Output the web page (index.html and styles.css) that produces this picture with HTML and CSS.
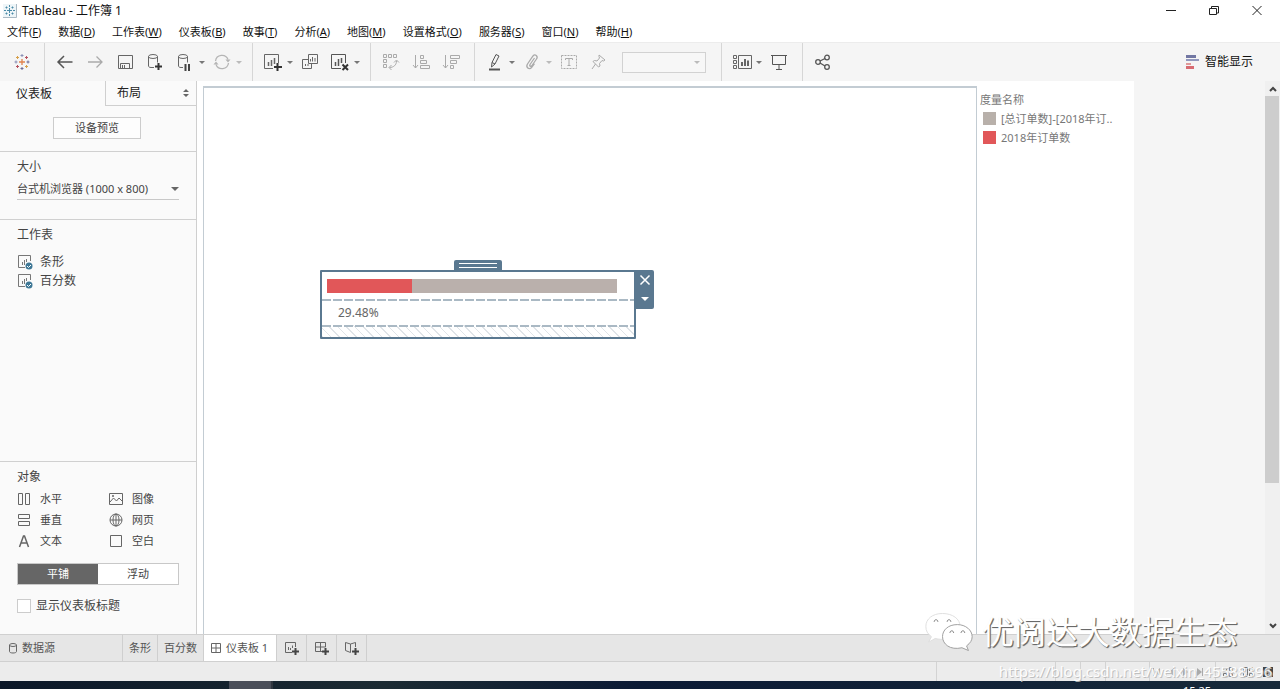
FILE: index.html
```html
<!DOCTYPE html>
<html lang="zh-CN">
<head>
<meta charset="utf-8">
<title>Tableau - 工作簿 1</title>
<link rel="stylesheet" href="styles.css">
</head>
<body>
<header class="titlebar">
  <svg class="app-icon" width="14" height="14" viewBox="0 0 14 14"><rect width="14" height="14" fill="#eef5f8"/><path d="M13.500 0v13.500H0" fill="none" stroke="#a9b9c4"/><path d="M6.500 4v5M4 6.500h5M6.500 1v2M6.500 10v2M1 6.500h2M10 6.500h2M3.500 2.500v2M2.500 3.500h2M9.500 2.500v2M8.500 3.500h2M3.500 8.500v2M2.500 9.500h2M9.500 8.500v2M8.500 9.500h2" stroke="#4b8ba8" fill="none"/></svg>
  <span class="title">Tableau - 工作簿 1</span>
  <div class="window-buttons">
    <button aria-label="最小化"><svg width="12" height="12"><path d="M1 5.500h10" stroke="#222"/></svg></button>
    <button aria-label="还原"><svg width="12" height="12" fill="none" stroke="#222"><path d="M1.500 3.500h7v6h-7zM3.500 3V1.500h7V8H9"/></svg></button>
    <button aria-label="关闭"><svg width="12" height="12"><path d="M1.500 1l9 9M10.500 1l-9 9" stroke="#222"/></svg></button>
  </div>
</header>
<nav class="menubar">
  <button>文件(<u>F</u>)</button><button>数据(<u>D</u>)</button><button>工作表(<u>W</u>)</button><button>仪表板(<u>B</u>)</button><button>故事(<u>T</u>)</button><button>分析(<u>A</u>)</button><button>地图(<u>M</u>)</button><button>设置格式(<u>O</u>)</button><button>服务器(<u>S</u>)</button><button>窗口(<u>N</u>)</button><button>帮助(<u>H</u>)</button>
</nav>
<div class="toolbar">
  <div class="group home">
    <button class="tool" aria-label="起始页"><svg width="18" height="18" fill="none"><path d="M9 6v6M6 9h6" stroke="#e0824c" stroke-width="1.300"/><path d="M9 1v3M7.500 2.500h3M1.500 9h3M3 7.500v3" stroke="#8a8fb5"/><path d="M9 14v3M7.500 15.500h3M13.500 9h3M15 7.500v3" stroke="#6d6a95"/><path d="M4.500 3v3M3 4.500h3M13.500 12v3M12 13.500h3" stroke="#d7a04a"/><path d="M13.500 3v3M12 4.500h3M4.500 12v3M3 13.500h3" stroke="#b5505e"/></svg></button>
  </div>
  <div class="group">
    <button class="tool" aria-label="撤消"><svg width="18" height="18" fill="none" stroke="#555" stroke-width="1.500"><path d="M2 9h14.500M8 3L2 9l6 6"/></svg></button>
    <button class="tool" aria-label="恢复" disabled><svg width="18" height="18" fill="none" stroke="#aaa" stroke-width="1.300"><path d="M2 9h14M10.500 3.500L16 9l-5.500 5.500"/></svg></button>
    <button class="tool" aria-label="保存"><svg width="18" height="18" fill="none" stroke="#666"><path d="M2.500 2.500h14v13h-14zM4.500 15V10.500h9V15M6.500 12v3M8.500 12v3"/></svg></button>
    <button class="tool" aria-label="新建数据源"><svg width="18" height="18" fill="none" stroke="#666"><path d="M8 14.500H5c-1.500 0-2.500-.700-2.500-1.500V3.500M11.500 3.500v6"/><ellipse cx="7" cy="3.500" rx="4.500" ry="2"/><path d="M12.500 10v7M9 13.500h7" stroke="#333" stroke-width="2"/></svg></button>
    <button class="tool" aria-label="暂停更新"><svg width="18" height="18" fill="none" stroke="#666"><path d="M7 14.500H5c-1.500 0-2.500-.700-2.500-1.500V3.500M11.500 3.500v6"/><ellipse cx="7" cy="3.500" rx="4.500" ry="2"/><path d="M9.500 11v7M13 11v7" stroke="#444" stroke-width="2"/></svg></button>
    <button class="caret" aria-label="更多"></button>
    <button class="tool" aria-label="刷新" disabled><svg width="18" height="18" fill="none" stroke="#b5b5b5" stroke-width="1.300"><path d="M2.500 8A6.500 6.500 0 0 1 15 6.500M15.500 10A6.500 6.500 0 0 1 3 11.500"/><path d="M12.500 6.500h5L15 9.500zM.500 11.500h5L3 8.500z" fill="#b5b5b5" stroke="none"/></svg></button>
    <button class="caret faint" aria-label="更多" disabled></button>
  </div>
  <div class="group">
    <button class="tool" aria-label="新建工作表"><svg width="18" height="18" fill="none" stroke="#666"><path d="M9 15.500H.500v-14h14V10"/><path d="M4.500 9v4M7.500 7v6M10.500 5v6" stroke-width="1.500"/><path d="M13.500 10v8M10 14h8" stroke="#333" stroke-width="2"/></svg></button>
    <button class="caret" aria-label="更多"></button>
    <button class="tool" aria-label="复制工作表"><svg width="18" height="18" fill="none" stroke="#666"><path d="M7.500 1.500h9v9h-9zM7 6.500H1.500v9h9V11M4.500 11v2M7 11v2M9.500 6v2.500M11.500 4v4.500M14 5v3.500"/></svg></button>
    <button class="tool" aria-label="清除工作表"><svg width="18" height="18" fill="none" stroke="#555"><path d="M10 15.500H.500v-14h14V10"/><path d="M4.500 9v4M7.500 6v7M10.500 5v5" stroke-width="1.500"/><path d="M11.500 11.500l5.500 5.500M17 11.500L11.500 17" stroke="#333" stroke-width="2"/></svg></button>
    <button class="caret" aria-label="更多"></button>
  </div>
  <div class="group">
    <button class="tool" aria-label="交换行和列" disabled><svg width="18" height="18" fill="none" stroke="#aaa"><path d="M1.500 1.500h3v3h-3zM6.500 1.500h3v3h-3zM11.500 1.500h3v3h-3zM1.500 6.500h3v3h-3zM1.500 11.500h3v3h-3zM14.500 8c0 4-3 6.500-7 6.500M12 9.500L14.500 7 17 9.500M9.500 12L7 14.500l2.500 2.500"/></svg></button>
    <button class="tool" aria-label="升序" disabled><svg width="18" height="18" fill="none" stroke="#aaa"><path d="M3.500 2v13M1 12l2.500 3L6 12M8.500 2.500h3v3h-3zM8.500 7.500h6v3h-6zM8.500 12.500h9v3h-9z"/></svg></button>
    <button class="tool" aria-label="降序" disabled><svg width="18" height="18" fill="none" stroke="#aaa"><path d="M3.500 2v13M1 12l2.500 3L6 12M8.500 2.500h9v3h-9zM8.500 7.500h6v3h-6zM8.500 12.500h3v3h-3z"/></svg></button>
  </div>
  <div class="group">
    <button class="tool" aria-label="突出显示"><svg width="18" height="18" fill="none" stroke="#555"><path d="M6 9.500L10 1.500l3 1.500-4 8-3.500 3zM6 9.500l3 1.500"/><path d="M3 16.500h11" stroke-width="2"/></svg></button>
    <button class="caret" aria-label="更多"></button>
    <button class="tool" aria-label="分组" disabled><svg width="18" height="18" fill="none" stroke="#aaa" stroke-width="1.300"><path d="M11.500 5L7 11.500c-1 1.500 1 2.500 2 1L13.500 6c2-3-1.500-5.500-3.500-3L4.500 11c-2 3 1.500 6.500 4 3.500l3-4"/></svg></button>
    <button class="caret faint" aria-label="更多" disabled></button>
    <button class="tool" aria-label="显示标签" disabled><svg width="18" height="18" fill="none" stroke="#aaa"><path d="M1.500 2.500h15v13h-15z" stroke-dasharray="2 1"/><path d="M5.500 7V5.500h7V7M9 5.500v7M7.500 12.500h3"/></svg></button>
    <button class="tool" aria-label="固定" disabled><svg width="18" height="18" fill="none" stroke="#aaa"><path d="M9 2l6 5-1.500 1-1.500-.500-2.500 3 .500 2.500-1.500 1L3 8.500l1.500-1 2.500.500L9.500 5 9 3.500zM5.500 11L2 16"/></svg></button>
    <span class="fit"><select aria-label="适合" disabled><option></option></select></span>
  </div>
  <div class="group">
    <button class="tool" aria-label="显示卡"><svg width="20" height="18" fill="none" stroke="#666"><path d="M6.500 2.500h13v13h-13zM1.500 2.500h3v3h-3zM1.500 7.500h3v3h-3zM1.500 12.500h3v3h-3z"/><path d="M10 9v4M13 6v7M16 7.500V13" stroke-width="2"/></svg></button>
    <button class="caret" aria-label="更多"></button>
    <button class="tool" aria-label="演示模式"><svg width="18" height="18" fill="none" stroke="#555"><path d="M1 2.500h16M2.500 3v8.500h13V3M9 12v4.500M6 16.500h6"/></svg></button>
  </div>
  <div class="group last">
    <button class="tool" aria-label="共享"><svg width="18" height="18" fill="none" stroke="#555" stroke-width="1.300"><circle cx="4" cy="9" r="2.300"/><circle cx="13" cy="4.500" r="2.300"/><circle cx="13" cy="14" r="2.300"/><path d="M6 8l5-2.500M6 10l5 3"/></svg></button>
  </div>
  <button class="show-me"><svg width="14" height="16"><path d="M1 2.500h10" stroke="#7277a3" stroke-width="3"/><path d="M1 6h13" stroke="#9298bd" stroke-width="2"/><path d="M1 10h5" stroke="#e09a9a" stroke-width="2"/><path d="M1 13.500h8" stroke="#d86b72" stroke-width="3"/></svg>智能显示</button>
</div>

<main class="workspace">
  <aside class="sidebar">
    <div class="side-tabs"><button class="side-tab current">仪表板</button><button class="side-tab">布局<svg width="6" height="8" fill="#666"><path d="M0 3l3-3 3 3zM0 5h6L3 8z"/></svg></button></div>
    <section class="device"><button class="preview">设备预览</button></section>
    <section class="size">
      <label for="size">大小</label>
      <select id="size"><option>台式机浏览器 (1000 x 800)</option></select>
    </section>
    <section class="sheets">
      <h2>工作表</h2>
      <ul>
        <li><svg width="18" height="18" fill="none" stroke="#777"><path d="M14.500 8V2.500h-12v12H9M6.500 9v3M8.500 7v5M10.500 6v3"/><circle cx="13" cy="13" r="3.500" fill="#3f7896" stroke="none"/><path d="M11 13l1.500 1.500L15 12" stroke="#fff"/></svg>条形</li>
        <li><svg width="18" height="18" fill="none" stroke="#777"><path d="M14.500 8V2.500h-12v12H9M6.500 9v3M8.500 7v5M10.500 6v3"/><circle cx="13" cy="13" r="3.500" fill="#3f7896" stroke="none"/><path d="M11 13l1.500 1.500L15 12" stroke="#fff"/></svg>百分数</li>
      </ul>
    </section>
    <section class="objects">
      <h2>对象</h2>
      <div class="object-grid">
        <span><svg width="14" height="14" fill="none" stroke="#666"><path d="M1.500 1.500h4v11h-4zM8.500 1.500h4v11h-4z"/></svg>水平</span>
        <span><svg width="14" height="14" fill="none" stroke="#666"><path d="M.500 1.500h13v11H.500zM1 10l3.500-4 3 3L10 6l3 3"/><circle cx="4" cy="4" r=".700"/></svg>图像</span>
        <span><svg width="14" height="14" fill="none" stroke="#666"><path d="M1.500 1.500h11v4h-11zM1.500 8.500h11v4h-11z"/></svg>垂直</span>
        <span><svg width="14" height="14" fill="none" stroke="#666"><circle cx="7" cy="7" r="6"/><ellipse cx="7" cy="7" rx="3" ry="6"/><path d="M1 7h12M7 1v12"/></svg>网页</span>
        <span><svg width="14" height="14" fill="none" stroke="#666" stroke-width="1.500"><path d="M2.500 13L6.500 2h1l4 11M4 9h6"/></svg>文本</span>
        <span><svg width="14" height="14" fill="none" stroke="#666"><path d="M1.500 1.500h11v11h-11z"/></svg>空白</span>
      </div>
      <div class="layout-mode"><button class="active">平铺</button><button>浮动</button></div>
      <label class="show-title"><input type="checkbox">显示仪表板标题</label>
    </section>
  </aside>

  <div class="dashboard">
    <div class="canvas">
      <div class="container">
        <button class="handle" aria-label="移动"></button>
        <div class="bar-zone"><div class="bar"><div class="bar-fill" style="width:29.48%"></div></div></div>
        <div class="value-zone">29.48%</div>
        <div class="empty-zone"></div>
        <div class="container-tools">
          <button aria-label="移除"><svg width="12" height="12"><path d="M1.500 1.500l9 9M10.500 1.500l-9 9" stroke="#fff" stroke-width="1.500"/></svg></button>
          <button aria-label="更多选项"><svg width="8" height="4" fill="#fff"><path d="M0 0h8L4 4z"/></svg></button>
        </div>
      </div>
    </div>
    <div class="legend">
      <h3>度量名称</h3>
      <p><i class="swatch rest"></i>[总订单数]-[2018年订..</p>
      <p><i class="swatch year"></i>2018年订单数</p>
    </div>
  </div>
  <div class="scrollbar">
    <svg width="10" height="8" fill="none" stroke="#444" stroke-width="2"><path d="M2 6l3-3 3 3"/></svg>
    <div class="track"><div class="thumb"></div></div>
    <svg width="10" height="8" fill="none" stroke="#444" stroke-width="2"><path d="M2 2l3 3 3-3"/></svg>
  </div>
</main>

<footer class="sheet-tabs">
  <button class="source"><svg width="10" height="12" fill="none" stroke="#666"><ellipse cx="5" cy="3" rx="3.500" ry="1.500"/><path d="M1.500 3v6.500c0 2 7 2 7 0V3"/></svg>数据源</button>
  <button>条形</button>
  <button>百分数</button>
  <button class="current"><svg width="12" height="12" fill="none" stroke="#666"><path d="M1.500 1.500h9v9h-9zM6 1.500v9M1.500 6h9"/></svg>仪表板 1</button>
  <button class="add" aria-label="新建工作表"><svg width="16" height="16" fill="none" stroke="#666"><path d="M8 12.500H1.500v-10h10V7M4.500 7v3M6.500 8v2M8.500 5.500V8"/><path d="M11.500 8v7M8 11.500h7" stroke="#444" stroke-width="2"/></svg></button>
  <button class="add" aria-label="新建仪表板"><svg width="16" height="16" fill="none" stroke="#666"><path d="M8 11.500H1.500v-9h10V7M6.500 2.500v9M1.500 7h10"/><path d="M11.500 8v7M8 11.500h7" stroke="#444" stroke-width="2"/></svg></button>
  <button class="add" aria-label="新建故事"><svg width="16" height="16" fill="none" stroke="#666"><path d="M11.500 7V2.500L6.500 4l-5-1.500v8l5 2V4"/><path d="M11.500 8v7M8 11.500h7" stroke="#444" stroke-width="2"/></svg></button>
</footer>
<div class="statusbar">
  <span class="cell wide"></span><span class="cell"></span><span class="cell"></span><span class="cell mid"></span>
  <span class="cell nav"><svg width="60" height="12" fill="#aaa"><path d="M3 2h1v8H3zM10 2v8L5 6zM24 2v8l-5-4zM33 2v8l5-4zM47 2v8l5-4zM52 2h1v8h-1z"/></svg></span>
  <span class="cell views"><svg width="52" height="12" fill="none" stroke="#777"><path d="M1.500 1.500h3v3h-3zM7.500 1.500h3v3h-3zM1.500 7.500h3v3h-3zM7.500 7.500h3v3h-3zM21.500 1.500h4v9h-4zM27.500 1.500h3v4h-3zM27.500 7.500h3v3h-3z"/><path d="M41 1h10v10H41z" fill="#444" stroke="none"/><path d="M44 3h3v6h-3" stroke="#ddd"/></svg></span>
</div>
<div class="taskbar"><span class="task"></span><span class="clock">15:25</span></div>

<div class="watermark">
  <svg width="50" height="42" viewBox="0 0 54 44"><g fill="#fff" stroke="#aaa"><path d="M20 2C9 2 2 8 2 16c0 5 2 8 6 11l-3 6 7-4c18 4 27-5 27-13C39 8 31 2 20 2z" stroke="#ddd"/><path d="M36 14c-10 0-16 6-16 13 0 8 8 15 21 12l7 3-2-5c4-3 6-6 6-10 0-7-7-13-16-13z" stroke="#999"/></g><g fill="none" stroke="#777"><path d="M11 11c0-3 4-3 4 0M25 11c0-3 4-3 4 0M28 23c0-3 4-3 4 0M40 23c0-3 4-3 4 0"/></g></svg>
  <span>优阅达大数据生态</span>
</div>
<div class="watermark-url">https://blog.csdn.net/weixin_45588396</div>
</body>
</html>
```
FILE: styles.css
```css
* { box-sizing: border-box; }
body {
  margin: 0;
  height: 100vh;
  display: flex;
  flex-direction: column;
  position: relative;
  overflow: hidden;
  background: #fff;
  color: #444;
  font: 12px/18px "Noto Sans", "Noto Sans CJK SC", sans-serif;
}
button, select, input { font: inherit; color: inherit; margin: 0; }
button { padding: 0; border: 0; background: none; white-space: nowrap; }
h2, h3, p, ul { margin: 0; padding: 0; font-size: 12px; font-weight: 400; list-style: none; }
svg { flex: none; }

.titlebar { display: flex; align-items: center; gap: 5px; height: 22px; padding-left: 3px; flex: none; color: #111; font-size: 12px; }
.window-buttons { display: flex; margin-left: auto; padding-right: 2px; }
.window-buttons button { width: 43px; height: 20px; display: grid; place-items: center; }
.menubar { display: flex; gap: 17px; align-items: center; height: 20px; padding-left: 7px; flex: none; color: #111; font-size: 11px; }
.menubar u { text-underline-offset: 1px; }

.toolbar { display: flex; height: 39px; flex: none; background: #f5f5f5; border-top: 1px solid #ececec; }
.group { display: flex; align-items: center; padding: 0 8px 0 5px; border-right: 1px solid #d6d6d6; }
.group.home { padding: 0 7px; }
.group.last { border: 0; }
.tool { width: 30px; height: 30px; display: grid; place-items: center; }
.caret { width: 10px; height: 20px; margin-left: -3px; display: grid; place-items: center; }
.caret::before { content: ""; border: 3px solid transparent; border-top-color: #777; border-bottom: 0; }
.caret.faint::before { border-top-color: #bbb; }
.fit { position: relative; margin: 0 7px 0 8px; display: flex; }
.fit select { appearance: none; width: 84px; height: 21px; padding: 0; border: 1px solid #d2d2d2; background: #f7f7f7; opacity: 1; }
.fit::after { content: ""; position: absolute; right: 6px; top: 9px; border: 3px solid transparent; border-top-color: #bbb; border-bottom: 0; pointer-events: none; }
.show-me { display: flex; align-items: center; gap: 6px; margin-left: auto; padding-right: 27px; color: #111; }

.workspace { flex: 1; min-height: 0; display: flex; background: #f5f5f5; }
.sidebar { width: 197px; flex: none; display: flex; flex-direction: column; background: #fafafa; border-right: 1px solid #cfcfcf; }
.sidebar section { border-top: 1px solid #d0d0d0; padding: 6px 17px 0; }
.side-tabs { display: flex; height: 25px; color: #222; }
.side-tab { flex: 1; display: flex; align-items: center; justify-content: space-between; padding: 0 7px 0 11px; border: solid #cfcfcf; border-width: 0 0 1px 1px; }
.side-tab.current { flex: 0 0 105px; padding-left: 16px; border: 0; }
.sidebar .device { height: 45px; padding: 11px 19px 0 17px; border: 0; text-align: center; }
.preview { width: 88px; height: 22px; border: 1px solid #ccc; background: #fdfdfd; font-size: 11px; }
.sidebar .size { position: relative; height: 68px; }
.size label { display: block; }
.size select {
  appearance: none;
  width: 100%;
  height: 22px;
  margin-top: 2px;
  padding: 0;
  border: 0;
  border-bottom: 1px solid #c8c8c8;
  font-size: 11px;
  background: none;
}
.size::after { content: ""; position: absolute; right: 17px; top: 35px; border: 4px solid transparent; border-top-color: #666; border-bottom: 0; pointer-events: none; }
.sidebar .sheets { flex: 1; min-height: 0; }
.sheets ul { padding-top: 8px; }
.sheets li { display: flex; align-items: center; gap: 6px; height: 19px; margin-left: -1px; }
.sidebar .objects { height: 173px; padding-top: 6px; }
.object-grid { display: grid; grid-template-columns: 92px 1fr; grid-auto-rows: 21px; padding-top: 2px; font-size: 11px; }
.object-grid span { display: flex; align-items: center; gap: 9px; }
.layout-mode { display: flex; height: 22px; margin-top: 12px; border: 1px solid #c8c8c8; background: #fff; font-size: 11px; }
.layout-mode button { flex: 1; }
.layout-mode .active { background: #666; color: #fff; }
.show-title { display: flex; align-items: center; gap: 5px; margin-top: 12px; white-space: nowrap; }
.show-title input { appearance: none; width: 14px; height: 14px; border: 1px solid #ccc; background: #fff; }

.dashboard { flex: 0 1 937px; display: flex; padding: 5px 0 0 6px; background: #fff; }
.canvas { flex: 1; position: relative; border: solid #c3ccd3; border-width: 2px 1px 0; }
.container { position: absolute; left: 116px; top: 182px; width: 316px; border: 2px solid #5a7890; border-radius: 1px; background: #fff; }
.handle { position: absolute; left: 132px; top: -12px; width: 48px; height: 11px; border-radius: 2px 2px 0 0; background: #5a7890; }
.handle::before { content: ""; position: absolute; inset: 3px 5px; border: solid #fff; border-width: 1px 0; }
.bar-zone { height: 27px; padding: 7px 17px 0 5px; }
.bar { height: 14px; background: #bab0ac; }
.bar-fill { height: 100%; background: #e15759; }
.value-zone { height: 26px; padding-left: 16px; line-height: 27px; color: #666; }
.value-zone, .empty-zone { background: repeating-linear-gradient(90deg, #aab9c4 0 9px, transparent 9px 11px) top / 100% 2px no-repeat; }
.empty-zone { height: 12px; background: repeating-linear-gradient(90deg, #aab9c4 0 9px, transparent 9px 11px) top / 100% 2px no-repeat, repeating-linear-gradient(45deg, #e0e4e8 0 1px, transparent 1px 6px); }
.container-tools { position: absolute; left: 313px; top: -2px; width: 19px; height: 39px; display: flex; flex-direction: column; background: #5a7890; border-radius: 0 2px 2px 0; }
.container-tools button { flex: 1; display: grid; place-items: center; }
.legend { width: 157px; padding: 5px 0 0 3px; color: #777; font-size: 11px; }
.legend h3 { font-size: 11px; }
.legend p { display: flex; align-items: center; gap: 5px; height: 19px; padding-left: 3px; white-space: nowrap; font-size: 11px; }
.swatch { width: 13px; height: 13px; flex: none; }
.swatch.rest { background: #b8b0aa; }
.swatch.year { background: #e15759; }
.scrollbar { width: 15px; margin-left: auto; display: flex; flex-direction: column; align-items: center; gap: 3px; padding: 4px 0; background: #f0f0f0; }
.track { flex: 1; align-self: stretch; }
.thumb { height: 74%; margin-right: 1px; background: #cdcdcd; }

.sheet-tabs { display: flex; height: 28px; flex: none; background: #e6e6e6; border: solid #d0d0d0; border-width: 1px 0; font-size: 11px; color: #555; }
.sheet-tabs button { display: flex; align-items: center; gap: 4px; padding: 0 6px; border-right: 1px solid #cfcfcf; }
.sheet-tabs .source { width: 123px; padding-left: 8px; }
.sheet-tabs .current { padding-right: 8px; background: #fff; }
.sheet-tabs .add { width: 30px; justify-content: center; }
.statusbar { display: flex; justify-content: flex-end; align-items: stretch; height: 19px; flex: none; background: #ececec; }
.cell { width: 25px; border-left: 1px solid #d3d3d3; display: flex; align-items: center; }
.cell.wide { width: 119px; }
.cell.mid { width: 44px; }
.cell.nav { width: 66px; }
.cell.views { width: 65px; padding-left: 6px; }
.taskbar { height: 8px; flex: none; overflow: hidden; display: flex; background: linear-gradient(90deg, #0b1728, #1c2b33 30%, #0b1a35 50%, #182a3a); }
.task { width: 44px; margin-left: 229px; background: #4a4e59; border-right: 2px solid #30363f; }
.clock { margin-left: auto; padding: 4px 69px 0 0; font-size: 11px; line-height: 12px; color: #fff; }

.watermark { position: absolute; right: 42px; bottom: 33px; display: flex; align-items: center; gap: 8px; pointer-events: none; font-size: 32px; line-height: 48px; color: #fff; text-shadow: 1px 1px 1px #666, 1px 1px 0 #888; }
.watermark-url { position: absolute; right: 8px; bottom: 9px; pointer-events: none; font: 15px/18px "Noto Sans", sans-serif; color: #fff; text-shadow: 1px 1px 0 #bbb; opacity: .9; }
```
